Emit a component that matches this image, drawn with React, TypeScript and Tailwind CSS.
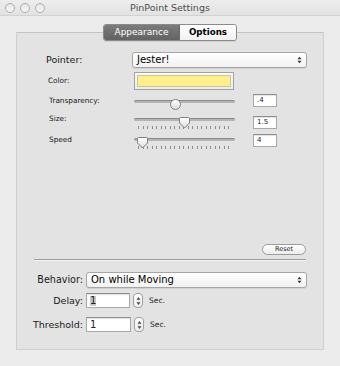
import React from "react";

function Updown({ size = 6 }: { size?: number }) {
  return (
    <svg width={size} height={size + 3} viewBox="0 0 6 9">
      <path d="M3 0.5 L5.5 3.5 L0.5 3.5 Z" fill="#3a3a3a" />
      <path d="M3 8.5 L5.5 5.5 L0.5 5.5 Z" fill="#3a3a3a" />
    </svg>
  );
}

function Popup({ text, w }: { text: string; w: number }) {
  return (
    <div
      className="h-[16px] rounded-[3px] border border-[#a6a6a6] bg-gradient-to-b from-white to-[#f2f2f2] flex items-center justify-between pl-[4px] pr-[4px] shadow-[0_1px_0_rgba(0,0,0,0.08)]"
      style={{ width: w }}
    >
      <span className="text-[10px] leading-none text-black">{text}</span>
      <Updown size={5} />
    </div>
  );
}

function Field({ text, w, h, size, selected }: { text: string; w: number; h: number; size: number; selected?: boolean }) {
  return (
    <div
      className="bg-white border border-[#a9a9a9] border-t-[#8e8e8e] flex items-center pl-[3px] shadow-[inset_0_1px_1px_rgba(0,0,0,0.12)]"
      style={{ width: w, height: h }}
    >
      <span
        className={"leading-none text-[#222] " + (selected ? "bg-[#c9c9c9]" : "")}
        style={{ fontSize: size }}
      >
        {text}
      </span>
    </div>
  );
}

function Slider({ pos, ticks, pointer }: { pos: number; ticks?: boolean; pointer?: boolean }) {
  return (
    <div className="w-[101px] relative">
      <div className="mt-[3px] h-[3px] rounded-full bg-[#b4b4b4] border-t border-[#8a8a8a]" />
      {ticks && (
        <div className="flex justify-between px-[4px] mt-[5px] w-[99px]">
          {Array.from({ length: 21 }).map((_, i) => (
            <span key={i} className="w-px h-[3px] bg-[#8e8e8e]" />
          ))}
        </div>
      )}
      {pointer ? (
        <svg className="absolute" style={{ left: pos, top: -1 }} width="11" height="12" viewBox="0 0 11 12">
          <defs>
            <linearGradient id={"kg" + pos} x1="0" y1="0" x2="0" y2="1">
              <stop offset="0" stopColor="#ffffff" />
              <stop offset="1" stopColor="#dcdcdc" />
            </linearGradient>
          </defs>
          <path d="M1.5 0.5 H9.5 Q10.5 0.5 10.5 1.5 V6 L5.5 11 L0.5 6 V1.5 Q0.5 0.5 1.5 0.5 Z" fill={"url(#kg" + pos + ")"} stroke="#7f7f7f" strokeWidth="1" />
        </svg>
      ) : (
        <div
          className="absolute w-[11px] h-[11px] rounded-full border border-[#808080] bg-gradient-to-b from-white to-[#dadada]"
          style={{ left: pos, top: -1 }}
        />
      )}
    </div>
  );
}

function Stepper() {
  return (
    <div className="w-[10px] h-[15px] rounded-[4px] border border-[#a0a0a0] bg-gradient-to-b from-white to-[#eeeeee] flex items-center justify-center">
      <svg width="5" height="10" viewBox="0 0 5 10">
        <path d="M2.5 1 L4.5 3.8 L0.5 3.8 Z" fill="#4a4a4a" />
        <path d="M2.5 9 L4.5 6.2 L0.5 6.2 Z" fill="#4a4a4a" />
        <line x1="0.5" y1="5" x2="4.5" y2="5" stroke="#c8c8c8" strokeWidth="0.6" />
      </svg>
    </div>
  );
}

function Light() {
  return <div className="w-[10px] h-[10px] rounded-full border border-[#adadad] bg-gradient-to-b from-[#e6e6e6] to-[#f6f6f6]" />;
}

export default function App() {
  return (
    <div className="w-[340px] h-[366px] bg-[#ececec] font-['DejaVu_Sans',sans-serif] overflow-hidden flex flex-col">
      {/* title bar */}
      <div className="h-[16px] relative flex items-center bg-gradient-to-b from-[#ededed] to-[#e2e2e2] border-b border-[#d2d2d2]">
        <div className="flex gap-[5px] pl-[5px] pt-[1px]">
          <Light />
          <Light />
          <Light />
        </div>
        <div className="absolute inset-0 flex items-center justify-center">
          <span className="text-[9.5px] text-[#4f4f4f] leading-none pt-[1px]">PinPoint Settings</span>
        </div>
      </div>

      {/* group box */}
      <div className="ml-[16px] mt-[16px] w-[308px] h-[318px] border border-[#cfcfcf] border-t-[#c4c4c4] bg-[#e3e3e3] flex flex-col">
        {/* tabs */}
        <div className="flex justify-center -mt-[9px]">
          <div className="flex h-[17px] rounded-[3px] border border-[#8a8a8a] overflow-hidden shadow-[0_1px_0_rgba(0,0,0,0.08)]">
            <div className="w-[76px] bg-gradient-to-b from-[#7c7c7c] to-[#626262] flex items-center justify-center border-r border-[#6a6a6a]">
              <span className="text-[9px] text-white leading-none">Appearance</span>
            </div>
            <div className="w-[56px] bg-gradient-to-b from-white to-[#f0f0f0] flex items-center justify-center">
              <span className="text-[8.7px] font-bold text-black leading-none">Options</span>
            </div>
          </div>
        </div>

        {/* Pointer */}
        <div className="flex items-center mt-[11px] ml-[29px]">
          <span className="w-[86px] text-[9.5px] text-[#1a1a1a] leading-none">Pointer:</span>
          <Popup text="Jester!" w={175} />
        </div>

        {/* Color */}
        <div className="flex items-center mt-[4px] ml-[31px]">
          <span className="w-[86px] text-[7.3px] text-[#1a1a1a] leading-none">Color:</span>
          <div className="w-[100px] h-[18px] border border-[#a2a2a2] bg-gradient-to-b from-[#fafafa] to-[#ececec] p-[2px]">
            <div className="w-full h-full bg-[#fdf08a] border border-[#c7c7a0]" />
          </div>
        </div>

        {/* Transparency */}
        <div className="flex items-start mt-[4px] ml-[32px] h-[13px]">
          <span className="w-[85px] text-[7.3px] text-[#1a1a1a] leading-none mt-[3px]">Transparency:</span>
          <div className="mt-[3px]">
            <Slider pos={36} />
          </div>
          <div className="ml-[18px]">
            <Field text=".4" w={24} h={13} size={7} />
          </div>
        </div>

        {/* Size */}
        <div className="flex items-start mt-[8px] ml-[32px] h-[13px]">
          <span className="w-[85px] text-[7.3px] text-[#1a1a1a] leading-none mt-[0px]">Size:</span>
          <div className="mt-[0px]">
            <Slider pos={45} ticks pointer />
          </div>
          <div className="ml-[18px] mt-[1px]">
            <Field text="1.5" w={24} h={13} size={7} />
          </div>
        </div>

        {/* Speed */}
        <div className="flex items-start mt-[7px] ml-[32px] h-[14px]">
          <span className="w-[85px] text-[7.3px] text-[#1a1a1a] leading-none mt-[1px]">Speed</span>
          <div className="mt-[0px]">
            <Slider pos={3} ticks pointer />
          </div>
          <div className="ml-[18px] mt-[-1px]">
            <Field text="4" w={24} h={13} size={7} />
          </div>
        </div>

        {/* Reset */}
        <div className="flex justify-end mr-[17px] mt-[95px]">
          <div className="w-[44px] h-[11px] rounded-full border border-[#9b9b9b] bg-gradient-to-b from-white to-[#ececec] flex items-center justify-center">
            <span className="text-[6.5px] text-[#222] leading-none">Reset</span>
          </div>
        </div>

        {/* separator */}
        <div className="mx-[17px] mt-[4px] h-px bg-[#9d9d9d] shadow-[0_1px_0_#f4f4f4]" />

        {/* Behavior */}
        <div className="flex items-center mt-[12px]">
          <span className="w-[66px] text-right text-[9.6px] text-[#1a1a1a] leading-none">Behavior:</span>
          <div className="ml-[3px]">
            <Popup text="On while Moving" w={221} />
          </div>
        </div>

        {/* Delay */}
        <div className="flex items-center mt-[5px]">
          <span className="w-[66px] text-right text-[9.5px] text-[#1a1a1a] leading-none">Delay:</span>
          <div className="ml-[3px]">
            <Field text="1" w={44} h={15} size={10} selected />
          </div>
          <div className="ml-[3px]">
            <Stepper />
          </div>
          <span className="ml-[6px] text-[7.5px] text-[#1a1a1a] leading-none">Sec.</span>
        </div>

        {/* Threshold */}
        <div className="flex items-center mt-[9px]">
          <span className="w-[66px] text-right text-[9.5px] text-[#1a1a1a] leading-none">Threshold:</span>
          <div className="ml-[3px]">
            <Field text="1" w={45} h={15} size={10} />
          </div>
          <div className="ml-[3px]">
            <Stepper />
          </div>
          <span className="ml-[6px] text-[7.5px] text-[#1a1a1a] leading-none">Sec.</span>
        </div>
      </div>
    </div>
  );
}
